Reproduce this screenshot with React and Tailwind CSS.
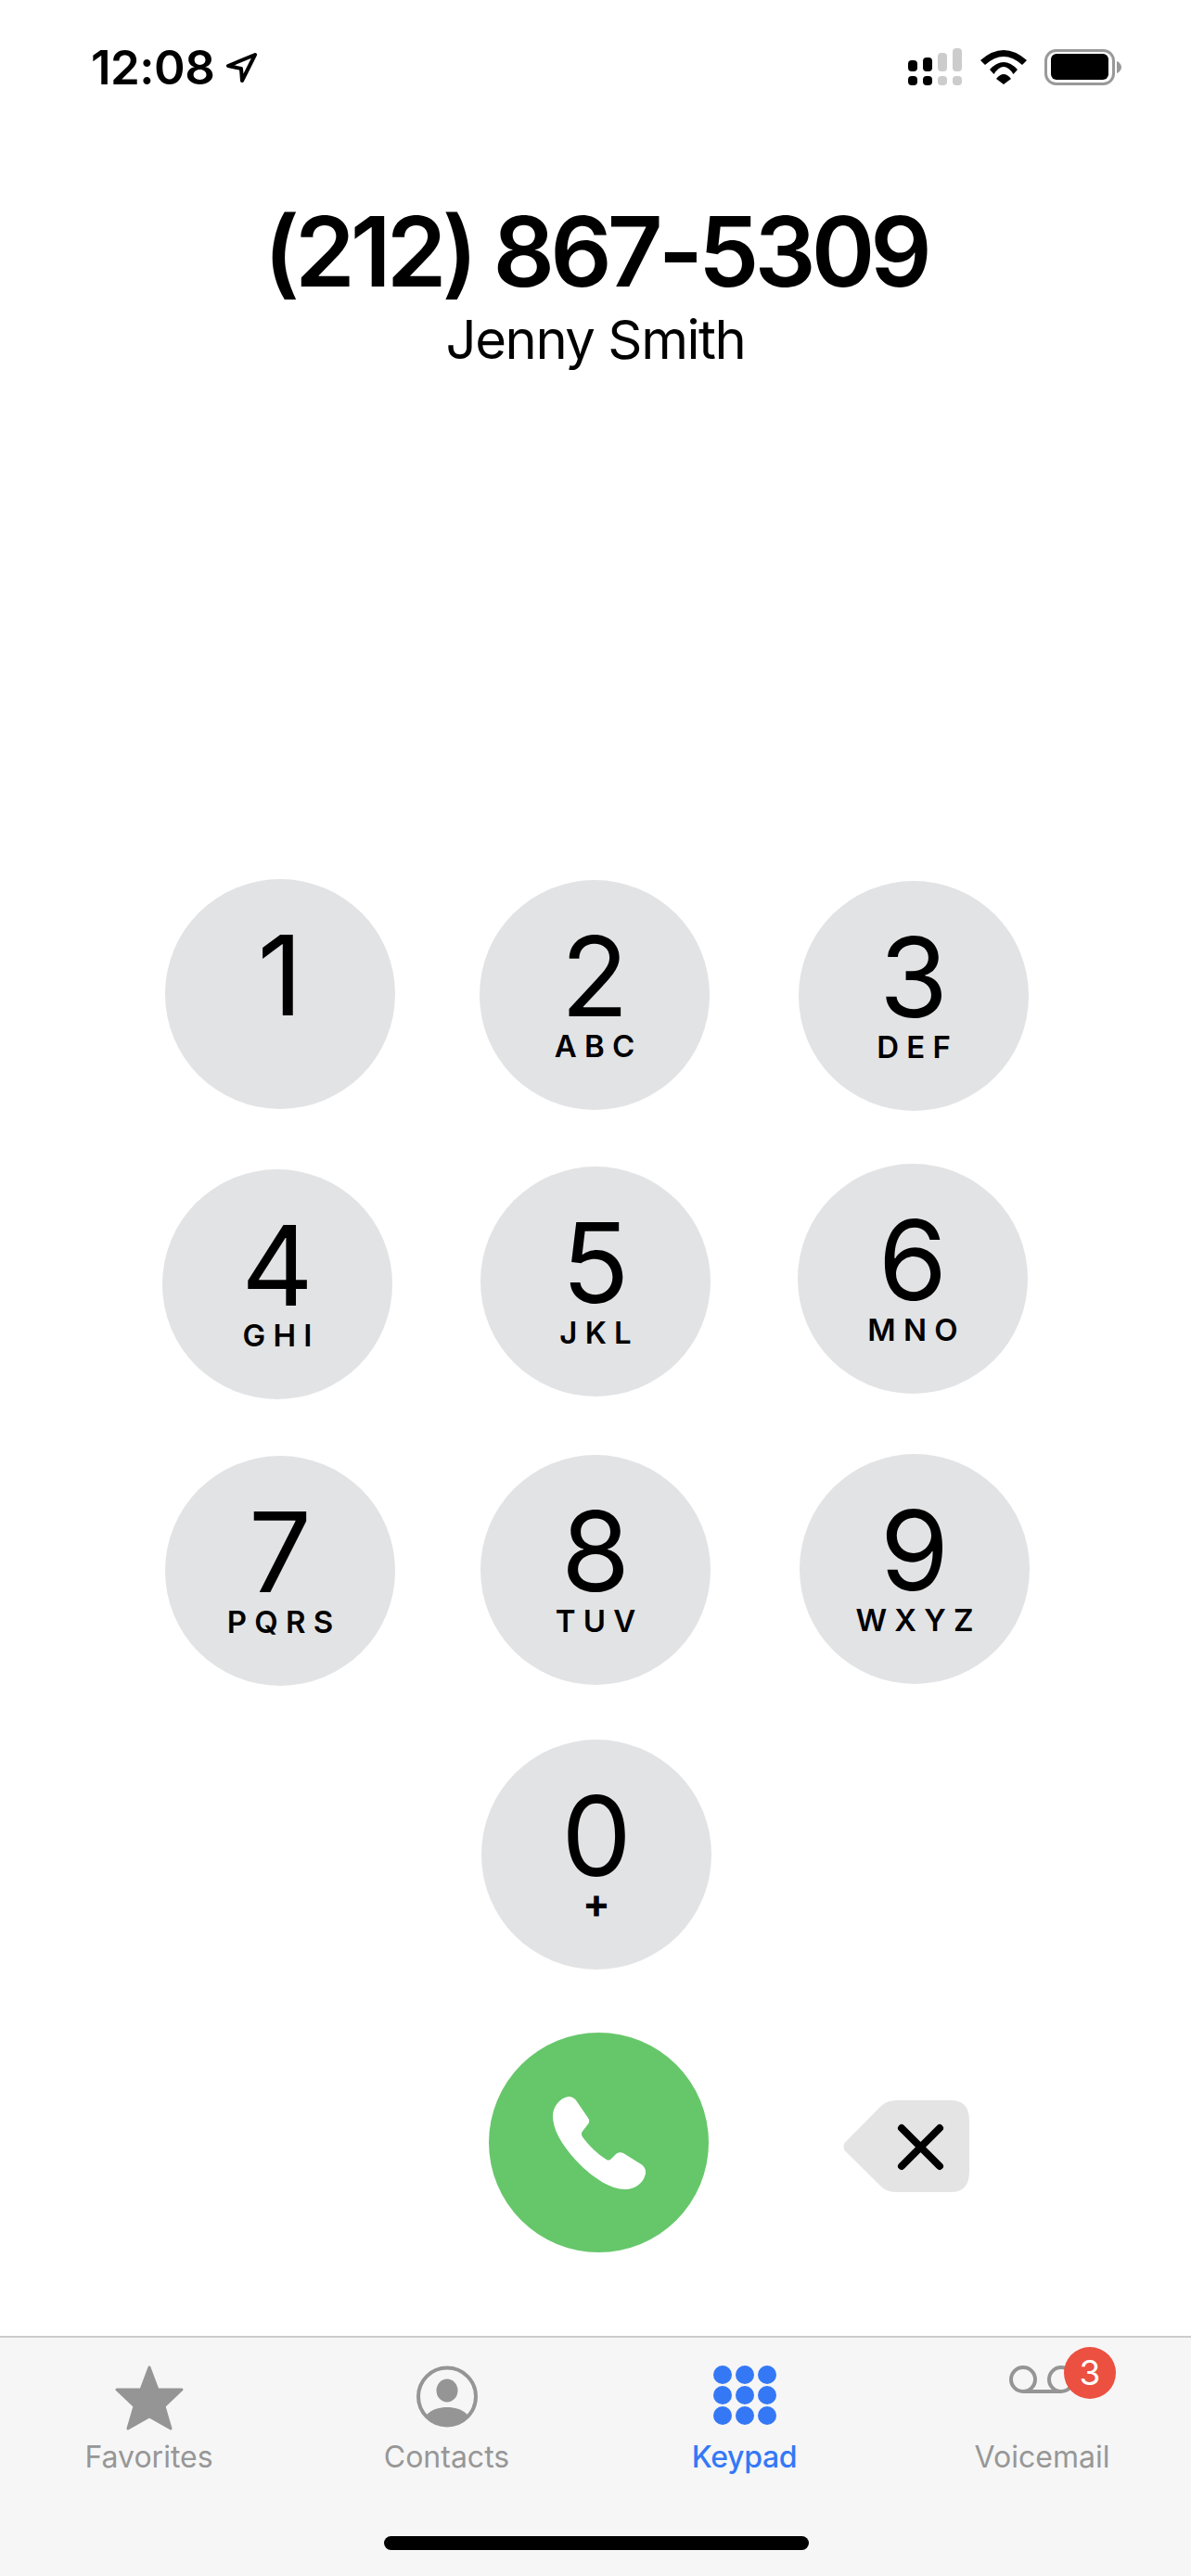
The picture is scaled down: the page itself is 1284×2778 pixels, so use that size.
import React from "react";

const FONT = "font-['Inter','Liberation_Sans',sans-serif]";

const rows = [
  {
    className: "mt-[0px]",
    keys: [
      { digit: "1", letters: "", box: "ml-[178px] mt-[0px]" },
      { digit: "2", letters: "ABC", box: "ml-[91px] mt-[1px]" },
      { digit: "3", letters: "DEF", box: "ml-[96px] mt-[2px]" },
    ],
  },
  {
    className: "mt-[57px]",
    keys: [
      { digit: "4", letters: "GHI", box: "ml-[175px] mt-[6px]" },
      { digit: "5", letters: "JKL", box: "ml-[95px] mt-[3px]" },
      { digit: "6", letters: "MNO", box: "ml-[94px] mt-[0px]" },
    ],
  },
  {
    className: "mt-[59px]",
    keys: [
      { digit: "7", letters: "PQRS", box: "ml-[178px] mt-[2px]" },
      { digit: "8", letters: "TUV", box: "ml-[92px] mt-[1px]" },
      { digit: "9", letters: "WXYZ", box: "ml-[96px] mt-[0px]" },
    ],
  },
  {
    className: "mt-[58px]",
    keys: [{ digit: "0", letters: "+", box: "ml-[519px] mt-[0px]" }],
  },
];

function Key({ digit, letters, box }) {
  return (
    <div className={`${box} w-[248px] h-[248px] shrink-0 rounded-full bg-[#e2e3e5] flex flex-col items-center pt-[44px] text-black`}>
      <span className="text-[120px] leading-[120px] font-[370]">{digit}</span>
      {letters === "+" ? (
        <span className="mt-[-4px] text-[44px] leading-[33px] font-bold">+</span>
      ) : (
        <span className="mt-[-1px] text-[33px] leading-[33px] font-semibold tracking-[0.25em] mr-[-0.25em]">{letters}</span>
      )}
    </div>
  );
}

function StatusBar() {
  return (
    <div className="h-[110px] flex items-start text-black">
      <span className="ml-[98px] mt-[48px] w-[135px] text-[51px] leading-[50px] font-semibold tracking-[-0.01em]">12:08</span>
      <svg className="ml-[11px] mt-[57px]" width="33" height="32" viewBox="0 0 33 32" fill="none" stroke="black" strokeWidth="4" strokeLinejoin="round">
        <path d="M31 2 L2 14 L16 17 L17 30 Z" />
      </svg>
      <svg className="ml-[702px] mt-[52px]" width="58" height="40" viewBox="0 0 58 40">
        <rect x="0" y="13" width="10" height="12" rx="4" fill="black" />
        <rect x="16" y="10" width="10" height="15" rx="4" fill="black" />
        <rect x="32" y="5" width="10" height="20" rx="4" fill="#cccccc" />
        <rect x="48" y="0" width="10" height="25" rx="4" fill="#cccccc" />
        <rect x="0" y="30" width="10" height="10" rx="4" fill="black" />
        <rect x="16" y="30" width="10" height="10" rx="4" fill="black" />
        <rect x="32" y="30" width="10" height="10" rx="4" fill="#cccccc" />
        <rect x="48" y="30" width="10" height="10" rx="4" fill="#cccccc" />
      </svg>
      <svg className="ml-[20px] mt-[54px]" width="50" height="37" viewBox="0 0 50 37" fill="black">
        <path d="M0 11 Q25 -11 50 11 L45 16 Q25 -2 5 16 Z" />
        <path d="M10 21 Q25 5 40 21 L35.5 26 Q25 10 14.5 26 Z" />
        <path d="M17 31 Q25 21 33 31 L25 37 Z" />
      </svg>
      <svg className="ml-[19px] mt-[53px]" width="83" height="39" viewBox="0 0 83 39">
        <rect x="1.5" y="1.5" width="73" height="36" rx="11" fill="none" stroke="#999999" strokeWidth="3" />
        <rect x="7" y="5" width="62" height="28" rx="6" fill="black" />
        <path d="M78 13 C81 14 83 17 83 19.5 C83 22 81 25 78 26 Z" fill="#999999" />
      </svg>
    </div>
  );
}

function CallRow() {
  return (
    <div className="mt-[68px] flex items-start">
      <div className="ml-[527px] w-[237px] h-[237px] rounded-full bg-[#66c76a] flex items-center justify-center">
        <svg width="100" height="100" viewBox="0 0 100 100" fill="white">
          <path d="M17 0 C20 0 23 1.5 25 4 L38 23 C39.5 25 39.5 27 38.5 29 L31.5 38 C30.5 40 31 42 32 43.5 C39 53 48 62 58 68 C59.5 69 61.5 68.5 62.5 67.5 L68 62 C70.5 60 73.5 59.5 76 61 L96 73.5 C99 76 100.5 79 100 83 C98 93 89 100 78 100 C62 100 45 88 31 75 C13 57 0 38 0 21 C0 12 6 2 17 0 Z" />
        </svg>
      </div>
      <svg className="ml-[145px] mt-[73px]" width="136" height="99" viewBox="0 0 136 99">
        <path d="M58 0 H116 Q136 0 136 22 V77 Q136 99 116 99 H58 Q47 99 41 93 L1.5 54 Q-0.5 50 1.5 46 L41 6 Q47 0 58 0 Z" fill="#e4e4e4" />
        <path d="M63 30 L104 71 M104 30 L63 71" stroke="black" strokeWidth="8" strokeLinecap="round" />
      </svg>
    </div>
  );
}

function StarIcon() {
  return (
    <svg width="74" height="70" viewBox="0 0 74 70" fill="#959595" stroke="#959595" strokeWidth="3" strokeLinejoin="round">
      <path d="M37 2 L46 26 L72 26 L53 44 L60 68 L37 55 L14 68 L21 44 L2 26 L28 26 Z" />
    </svg>
  );
}

function ContactIcon() {
  return (
    <svg width="66" height="67" viewBox="0 0 66 67" fill="#959595">
      <circle cx="33" cy="33.5" r="31" fill="none" stroke="#959595" strokeWidth="4" />
      <ellipse cx="33" cy="27" rx="11.5" ry="12.5" />
      <path d="M11 53 C17 47 25 45 33 45 C41 45 49 47 55 53 C49 60 41 64 33 64 C25 64 17 60 11 53 Z" />
    </svg>
  );
}

function KeypadIcon() {
  const dots = [];
  for (const cy of [10, 32, 54]) {
    for (const cx of [10, 34, 58]) {
      dots.push(<circle key={`${cx}-${cy}`} cx={cx} cy={cy} r="10" />);
    }
  }
  return (
    <svg width="68" height="64" viewBox="0 0 68 64" fill="#3478f6">
      {dots}
    </svg>
  );
}

function VoicemailIcon() {
  return (
    <div className="relative w-[71px] h-[64px]">
      <svg width="71" height="30" viewBox="0 0 71 30" fill="none" stroke="#959595" strokeWidth="4">
        <circle cx="15" cy="15" r="13" />
        <circle cx="56" cy="15" r="13" />
        <path d="M15 28 H56" />
      </svg>
      <span className="absolute left-[59px] top-[-20px] w-[56px] h-[56px] rounded-full bg-[#eb5040] text-white text-[37px] leading-[56px] text-center">3</span>
    </div>
  );
}

const tabs = [
  { label: "Favorites", icon: <StarIcon />, color: "text-[#979797]" },
  { label: "Contacts", icon: <ContactIcon />, color: "text-[#979797]" },
  { label: "Keypad", icon: <KeypadIcon />, color: "text-[#3478f6] font-medium tracking-[-0.01em]" },
  { label: "Voicemail", icon: <VoicemailIcon />, color: "text-[#979797]" },
];

function TabBar() {
  return (
    <div className="mt-[90px] flex-1 bg-[#f6f6f6] border-t-2 border-[#cccccc] flex flex-col">
      <div className="grid grid-cols-4">
        {tabs.map((tab) => (
          <div key={tab.label} className="flex flex-col items-center pt-[30px]">
            <div className="h-[83px] flex items-start justify-center">{tab.icon}</div>
            <span className={`text-[32px] leading-[32px] ${tab.color}`}>{tab.label}</span>
          </div>
        ))}
      </div>
      <div className="ml-[414px] mt-[69px] w-[458px] h-[15px] rounded-full bg-black" />
    </div>
  );
}

export default function App() {
  return (
    <div className={`${FONT} w-[1284px] h-[2778px] bg-white flex flex-col overflow-hidden`}>
      <StatusBar />
      <div className="mt-[109px] text-center text-black">
        <div className="text-[104px] leading-[104px] font-semibold tracking-[-0.048em]">(212) 867-5309</div>
        <div className="mt-[14px] text-[58px] leading-[58px] tracking-[-0.025em]">Jenny Smith</div>
      </div>
      <div className="mt-[553px] flex flex-col">
        {rows.map((row, i) => (
          <div key={i} className={`${row.className} flex items-start`}>
            {row.keys.map((k) => (
              <Key key={k.digit} {...k} />
            ))}
          </div>
        ))}
      </div>
      <CallRow />
      <TabBar />
    </div>
  );
}
